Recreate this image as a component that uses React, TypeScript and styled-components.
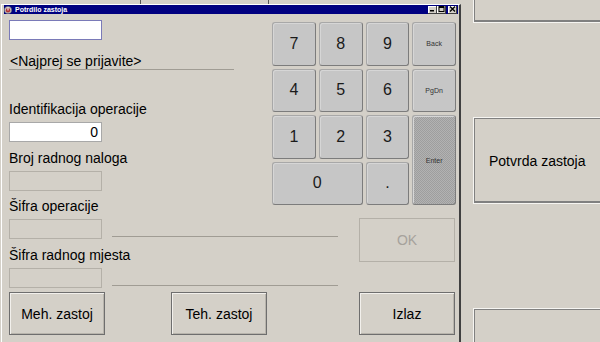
import React from "react";
import styled, { createGlobalStyle } from "styled-components";

const GlobalStyle = createGlobalStyle`
  html, body { margin: 0; padding: 0; background: #d4d0c8; }
  body { font-family: "Liberation Sans", Arial, sans-serif; }
  * { box-sizing: border-box; }
`;

const Screen = styled.div`
  width: 600px;
  height: 342px;
  overflow: hidden;
  display: flex;
  background: #d4d0c8;
  color: #000;
`;

const LeftArea = styled.div`
  width: 461px;
  flex: none;
  display: flex;
  flex-direction: column;
`;

const TopStrip = styled.div`
  height: 4px;
  flex: none;
  display: flex;
`;

const Tick = styled.span<{ $left: number }>`
  width: 1px;
  height: 4px;
  background: #555;
  margin-left: ${(p) => p.$left}px;
`;

const Window = styled.div`
  flex: 1;
  margin-left: 1px;
  border-top: 1px solid #fff;
  border-left: 1px solid #fff;
  border-right: 2px solid #404040;
  padding: 0 1px 0 2px;
  display: flex;
  flex-direction: column;
`;

const TitleBar = styled.div`
  height: 9px;
  flex: none;
  background: #000080;
  display: flex;
  align-items: center;
  padding-right: 1px;
  color: #fff;
  font-weight: bold;
  font-size: 7px;
  line-height: 9px;
`;

const TitleText = styled.span`
  margin-left: 3px;
  white-space: nowrap;
`;

const Controls = styled.div`
  margin-left: auto;
  display: flex;
  align-items: center;
`;

const CtrlButton = styled.div<{ $gap?: number }>`
  width: 9px;
  height: 8px;
  margin-left: ${(p) => p.$gap ?? 0}px;
  background: #d4d0c8;
  border-style: solid;
  border-width: 0 1px 1px 0;
  border-color: #404040;
  box-shadow: inset 1px 1px 0 #fff;
  display: flex;
  align-items: center;
  justify-content: center;
`;

const Client = styled.div`
  padding: 6px 0 0 5px;
  display: flex;
  flex-direction: column;
`;

const RowA = styled.div`
  display: flex;
  align-items: flex-start;
`;

const FormColumn = styled.div`
  width: 263px;
  flex: none;
  display: flex;
  flex-direction: column;
`;

const TopField = styled.div`
  width: 93px;
  height: 20px;
  border: 1px solid #7a7ab8;
  background: #fff;
`;

const Prompt = styled.div`
  margin-top: 14px;
  width: 225px;
  padding-left: 1px;
  font-size: 14px;
  line-height: 15px;
  border-bottom: 1px solid #a09c94;
  white-space: nowrap;
`;

const Label = styled.div<{ $top: number }>`
  margin-top: ${(p) => p.$top}px;
  margin-bottom: 5px;
  font-size: 14px;
  line-height: 16px;
  white-space: nowrap;
`;

const Field = styled.div<{ $enabled?: boolean }>`
  width: 93px;
  height: 20px;
  flex: none;
  border: 1px solid ${(p) => (p.$enabled ? "#a8a8a8" : "#b4b0a8")};
  background: ${(p) => (p.$enabled ? "#fff" : "#d4d0c8")};
  font-size: 14px;
  line-height: 18px;
  text-align: right;
  padding-right: 3px;
`;

const Keypad = styled.div`
  margin-top: 2px;
  width: 184px;
  display: grid;
  grid-template-columns: repeat(4, 1fr);
  grid-template-rows: repeat(4, 43.5px);
  gap: 3px;
`;

const Key = styled.div<{ $small?: boolean; $enter?: boolean; $cols?: number; $rows?: number }>`
  grid-column: span ${(p) => p.$cols ?? 1};
  grid-row: span ${(p) => p.$rows ?? 1};
  border-radius: 3px;
  border: 1px solid #a8a8a8;
  border-right-color: #7c7c7c;
  border-bottom-color: #7c7c7c;
  box-shadow: inset 1px 1px 0 #d6d6d6;
  background-color: ${(p) => (p.$enter ? "#a8a8a8" : "#c6c6c6")};
  background-image: ${(p) =>
    p.$enter
      ? "repeating-conic-gradient(#9e9e9e 0% 25%, #b2b2b2 0% 50%)"
      : "none"};
  background-size: 2px 2px;
  display: flex;
  align-items: center;
  justify-content: center;
  font-size: ${(p) => (p.$small || p.$enter ? 7 : 16)}px;
  color: ${(p) => (p.$small || p.$enter ? "#333" : "#1a1a1a")};
`;

const RowB = styled.div`
  display: flex;
  align-items: flex-start;
`;

const SubColumn = styled.div`
  width: 350px;
  flex: none;
  display: flex;
  flex-direction: column;
`;

const FieldRow = styled.div`
  display: flex;
  align-items: flex-end;
`;

const Rule = styled.div`
  width: 226px;
  margin-left: 10px;
  margin-bottom: 2px;
  border-bottom: 1px solid #a09c94;
`;

const OkButton = styled.div`
  margin-top: -1px;
  width: 96px;
  height: 44px;
  border: 1px solid #b4b0a8;
  color: #a6a29c;
  font-size: 14px;
  display: flex;
  align-items: center;
  justify-content: center;
`;

const ButtonRow = styled.div`
  margin-top: 4px;
  display: flex;
`;

const DialogButton = styled.div<{ $left?: number }>`
  width: 96px;
  height: 43px;
  margin-left: ${(p) => p.$left ?? 0}px;
  border: 1px solid #6e6e6e;
  box-shadow: inset 1px 1px 0 #f2f0ec, inset -1px -1px 0 #b8b4ac;
  font-size: 14px;
  display: flex;
  align-items: center;
  justify-content: center;
`;

const RightArea = styled.div`
  flex: 1;
  padding-left: 12px;
  display: flex;
  flex-direction: column;
`;

const SideButton = styled.div<{ $top: number; $height: number }>`
  width: 140px;
  flex: none;
  margin-top: ${(p) => p.$top}px;
  height: ${(p) => p.$height}px;
  border: 1px solid #f6f5f2;
  border-right: none;
  box-shadow: inset 1px 1px 0 #808080, inset 0 -2px 0 #808080;
  font-size: 14px;
  display: flex;
  align-items: center;
  padding-left: 15px;
`;

const TitleIcon = () => (
  <svg width="8" height="8" viewBox="0 0 8 8">
    <circle cx="4" cy="4" r="3.6" fill="#c8c8c8" stroke="#707070" strokeWidth="0.6" />
    <circle cx="4" cy="4.2" r="2.2" fill="#b03030" />
    <rect x="3.4" y="1.5" width="1.2" height="3" fill="#f0e0e0" />
  </svg>
);

export default function App() {
  return (
    <>
      <GlobalStyle />
      <Screen>
        <LeftArea>
          <TopStrip>
            <Tick $left={140} />
            <Tick $left={127} />
          </TopStrip>
          <Window>
            <TitleBar>
              <TitleIcon />
              <TitleText>Potrdilo zastoja</TitleText>
              <Controls>
                <CtrlButton>
                  <svg width="7" height="6" viewBox="0 0 7 6">
                    <rect x="1" y="4" width="4" height="1.5" fill="#000" />
                  </svg>
                </CtrlButton>
                <CtrlButton>
                  <svg width="7" height="6" viewBox="0 0 7 6">
                    <rect x="1" y="0.5" width="5" height="5" fill="none" stroke="#000" strokeWidth="1" />
                    <rect x="1" y="0.5" width="5" height="1.5" fill="#000" />
                  </svg>
                </CtrlButton>
                <CtrlButton $gap={2}>
                  <svg width="7" height="6" viewBox="0 0 7 6">
                    <path d="M1 0.5 L6 5.5 M6 0.5 L1 5.5" stroke="#000" strokeWidth="1.3" />
                  </svg>
                </CtrlButton>
              </Controls>
            </TitleBar>
            <Client>
              <RowA>
                <FormColumn>
                  <TopField />
                  <Prompt>&lt;Najprej se prijavite&gt;</Prompt>
                  <Label $top={31}>Identifikacija operacije</Label>
                  <Field $enabled>0</Field>
                  <Label $top={8}>Broj radnog naloga</Label>
                  <Field />
                  <Label $top={7}>Šifra operacije</Label>
                </FormColumn>
                <Keypad>
                  <Key>7</Key>
                  <Key>8</Key>
                  <Key>9</Key>
                  <Key $small>Back</Key>
                  <Key>4</Key>
                  <Key>5</Key>
                  <Key>6</Key>
                  <Key $small>PgDn</Key>
                  <Key>1</Key>
                  <Key>2</Key>
                  <Key>3</Key>
                  <Key $enter $rows={2}>Enter</Key>
                  <Key $cols={2}>0</Key>
                  <Key>.</Key>
                </Keypad>
              </RowA>
              <RowB>
                <SubColumn>
                  <FieldRow>
                    <Field />
                    <Rule />
                  </FieldRow>
                  <Label $top={8}>Šifra radnog mjesta</Label>
                </SubColumn>
                <OkButton>OK</OkButton>
              </RowB>
              <FieldRow>
                <Field />
                <Rule />
              </FieldRow>
              <ButtonRow>
                <DialogButton>Meh. zastoj</DialogButton>
                <DialogButton $left={66}>Teh. zastoj</DialogButton>
                <DialogButton $left={92}>Izlaz</DialogButton>
              </ButtonRow>
            </Client>
          </Window>
        </LeftArea>
        <RightArea>
          <SideButton $top={-17} $height={40} />
          <SideButton $top={94} $height={87}>Potvrda zastoja</SideButton>
          <SideButton $top={104} $height={60} />
        </RightArea>
      </Screen>
    </>
  );
}
